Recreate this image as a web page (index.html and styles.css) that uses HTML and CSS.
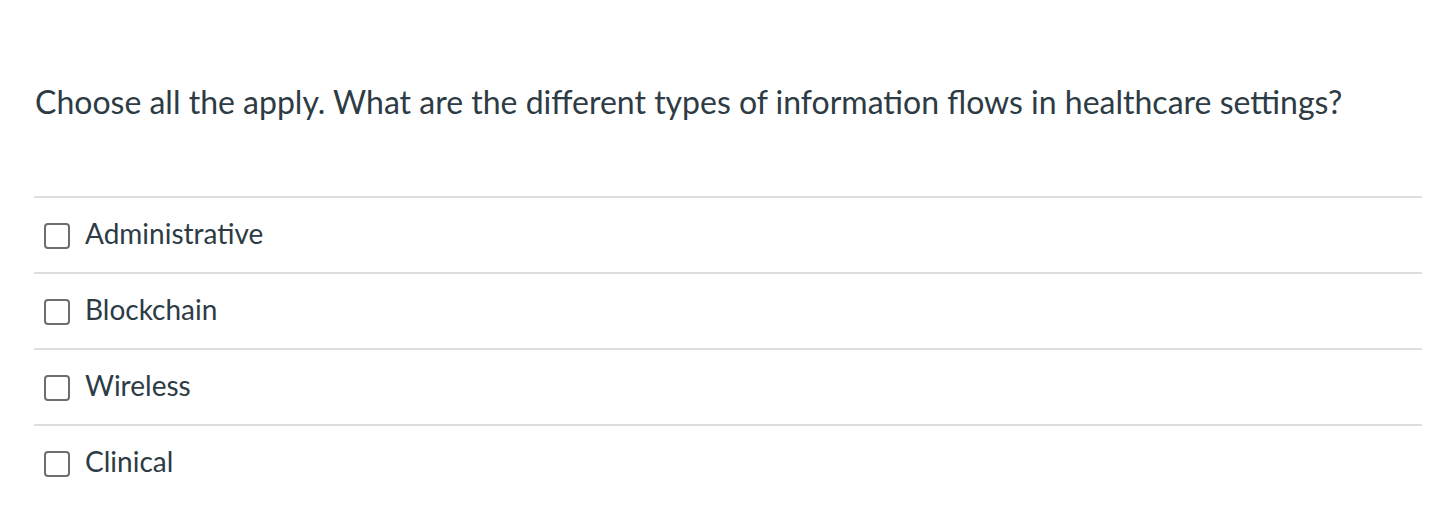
FILE: index.html
```html
<!DOCTYPE html>
<html>
<head>
<meta charset="utf-8">
<link rel="stylesheet" href="styles.css">
</head>
<body>
<div class="quiz">
  <p class="question">Choose all the apply. What are the different types of information flows in healthcare settings?</p>
  <div class="answers">
    <label class="answer"><span class="box"></span><span class="label">Administrative</span></label>
    <label class="answer"><span class="box"></span><span class="label">Blockchain</span></label>
    <label class="answer"><span class="box"></span><span class="label">Wireless</span></label>
    <label class="answer"><span class="box"></span><span class="label">Clinical</span></label>
  </div>
</div>
</body>
</html>
```
FILE: styles.css
```css
html, body {
  margin: 0;
  padding: 0;
  background: #fff;
}
.quiz {
  font-family: Lato, "Open Sans", sans-serif;
  color: #2d3b45;
  padding: 0 22px 0 34px;
}
.question {
  margin: 0;
  padding-top: 80px;
  font-size: 32px;
  line-height: 44px;
  height: 116px;
  padding-left: 1px;
}
.answers {
  border-top: 2px solid #dddddd;
}
.answer {
  display: flex;
  align-items: center;
  height: 74px;
  border-bottom: 2px solid #dddddd;
  padding-left: 10px;
}
.answer:last-child {
  border-bottom: none;
}
.box {
  width: 22px;
  height: 22px;
  border: 2px solid #6e6e6e;
  border-radius: 4px;
  flex: none;
  margin-top: 2px;
}
.label {
  margin-left: 15px;
  margin-bottom: 4px;
  font-size: 28px;
  line-height: 34px;
}
```
